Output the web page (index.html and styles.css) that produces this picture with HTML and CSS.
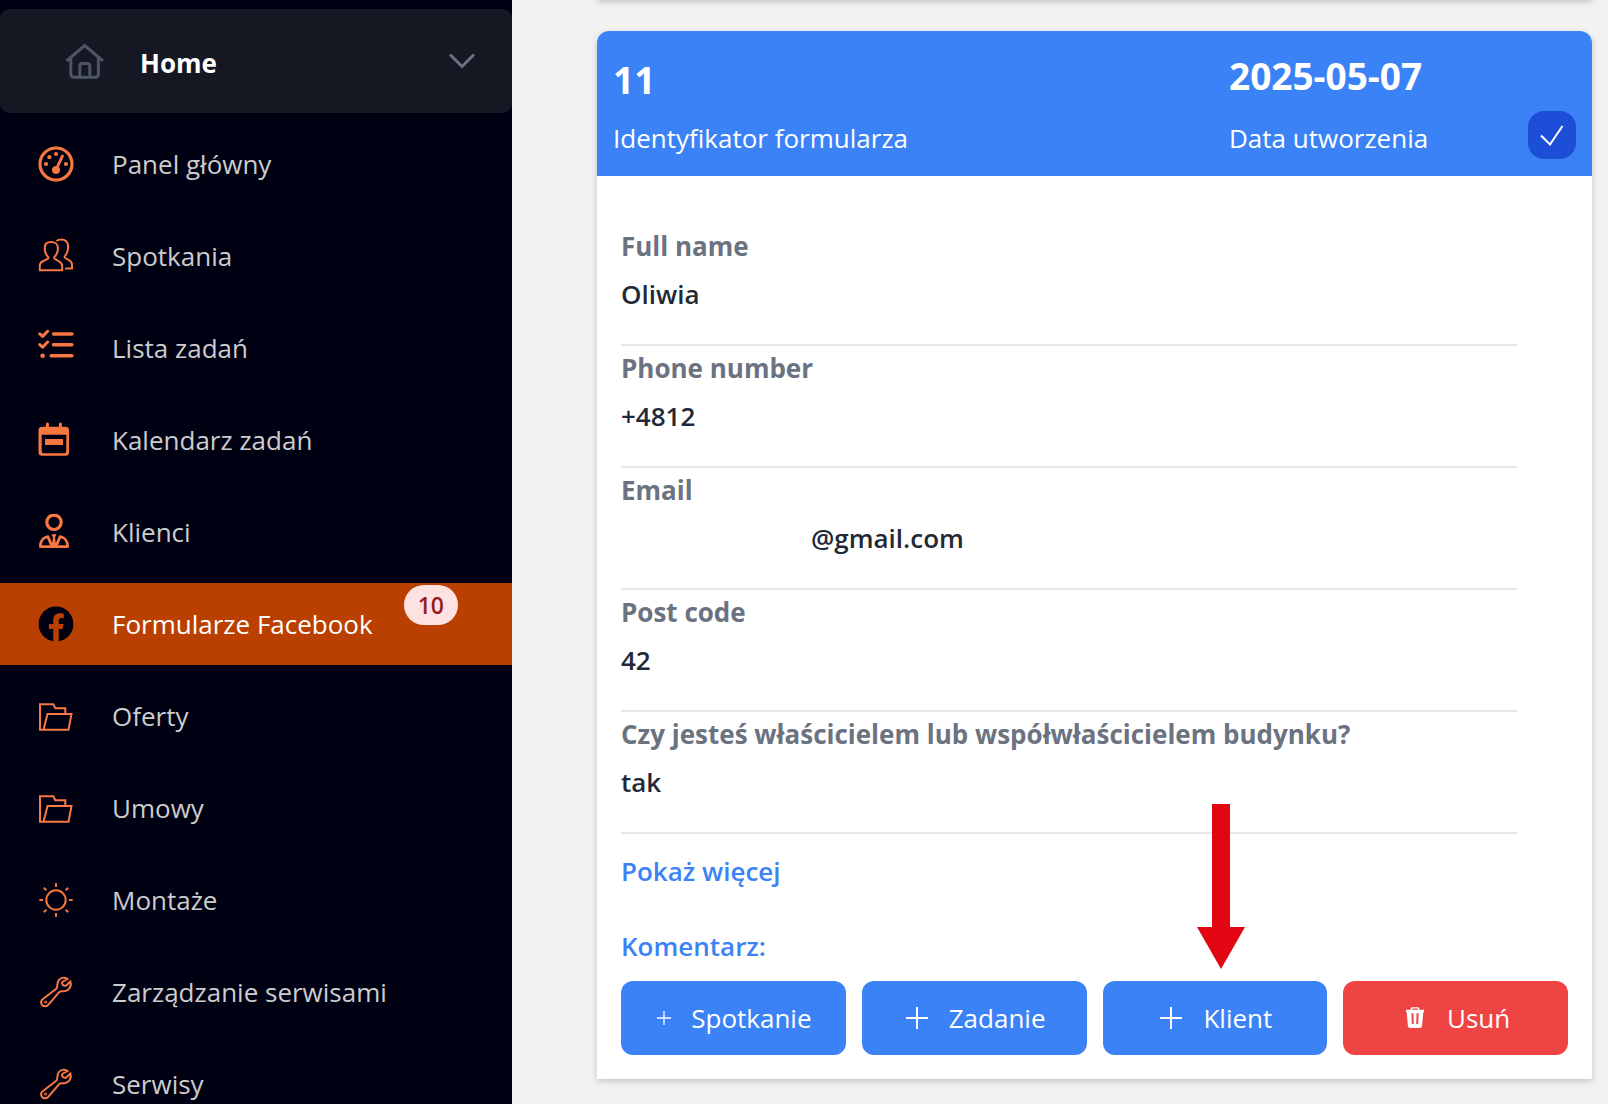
FILE: index.html
```html
<!DOCTYPE html>
<html lang="pl">
<head>
  <meta charset="UTF-8">
  <meta name="viewport" content="width=device-width, initial-scale=1.0">
  <title>Formularze Facebook</title>
  <link rel="stylesheet" href="styles.css">
</head>
<body>
  <!-- shared icons -->
  <svg class="sprite" aria-hidden="true">
    <symbol id="folder" viewBox="0 0 36 36">
      <path d="M5.5 31.7H2V6.3h13.3l2 4h10V16M5.5 31.7L9.5 16h24l-3 15.7z"/>
    </symbol>
    <symbol id="wrench" viewBox="0 0 36 36">
      <path d="M29.5 5C26.5 3 22.5 3.5 20.5 6.5 19 9 19.5 11.5 19 13.5c-.2 1-1 1.5-2 2.3L5 25c-2 1.5-2.2 4-1 5.8 1.8 2.2 4.8 1.8 6.5-.2l10-11.8c1-1.3 2-1.6 3.5-1.5 3 .3 6-.7 7.8-3.5 1.2-2 1.4-4.3.6-6.3l-3.9 3.8c-1.5 1-4 .3-4.5-1.8 0-1 .3-1.5 1-2z"/>
      <circle cx="7.6" cy="28" r=".5"/>
    </symbol>
    <symbol id="plus" viewBox="0 0 28 28">
      <path d="M14 3v22M3 14h22"/>
    </symbol>
  </svg>

  <div class="container">
    <aside class="sidebar">
      <button class="home" type="button">
        <svg class="home-icon" viewBox="0 0 40 36">
          <path d="M1.5 18L19.7 2.5 38 18M5.8 15v16q0 3.3 3.3 3.3h21q3.3 0 3.3-3.3V15M14.8 34V23q0-2.5 2.5-2.5h5q2.5 0 2.5 2.5v11"/>
        </svg>
        <span>Home</span>
        <svg class="chevron" viewBox="0 0 28 16"><path d="M2 1.5l12 12 12-12"/></svg>
      </button>
      <nav class="menu">
        <a href="#">
          <svg class="icon" viewBox="0 0 36 36">
            <circle cx="18" cy="18" r="16" stroke-width="3.2"/>
            <path d="M24.4 10L18 24" stroke-width="3" stroke-linecap="round"/>
            <g class="fill"><circle cx="18" cy="24" r="4"/><circle cx="8" cy="18" r="2.1"/><circle cx="11.4" cy="11.2" r="2.1"/><circle cx="18" cy="8" r="2.1"/><circle cx="28" cy="18" r="2.1"/></g>
          </svg>
          <span>Panel główny</span>
        </a>
        <a href="#">
          <svg class="icon" viewBox="0 0 36 36">
            <path d="M1.8 32.2V27.5C1.8 25 3.5 23.8 6 22.8L9.5 21c1-.7 1.3-1.2.5-2.2C7.5 16 6.8 14.5 6.8 12V9.5C6.8 6 9.5 4.1 13.2 4.1s6.6 1.9 6.6 5.4V12c0 2.5-.8 4-3.3 6.8-.7 1-.5 1.6.5 2.2l3.5 2.2c2.5 1.3 3.7 2.6 3.7 4.8v4.2zM18.5 3.2c1-1.2 3-1.6 5-1.6C27 1.6 30 4 30 7.5v3c0 3.5-.8 5-3 7.5-.7.9-.5 1.5.3 2l3.2 1.9c2.5 1.4 3.5 2.6 3.5 4.6v4h-7"/>
          </svg>
          <span>Spotkania</span>
        </a>
        <a href="#">
          <svg class="icon" viewBox="0 0 36 36">
            <g stroke-linecap="round" stroke-linejoin="round"><path d="M15.5 4h18.4M15.5 14.8h18.4M13.2 25.7h20.7" stroke-width="3.4"/><path d="M1.8 3.8l2.8 2.6 5-5.2M1.8 14.6l2.8 2.6 5-5.2" stroke-width="3"/></g>
            <circle class="fill" cx="4.6" cy="25.7" r="2.3"/>
          </svg>
          <span>Lista zadań</span>
        </a>
        <a href="#">
          <svg class="icon" viewBox="0 0 36 36">
            <path class="fill" fill-rule="evenodd" d="M4 4.7h23.5q3.5 0 3.5 3.5v22q0 3.5-3.5 3.5H4Q.5 33.7.5 30.2v-22Q.5 4.7 4 4.7zM3.7 12.7v16.6q0 2 2 2h20.6q2 0 2-2V12.7zM7 17h18v6H7z"/>
            <path d="M9.4 2v5M22.4 2v5" stroke-width="3" stroke-linecap="round"/>
          </svg>
          <span>Kalendarz zadań</span>
        </a>
        <a href="#">
          <svg class="icon" viewBox="0 0 36 36">
            <circle cx="16" cy="8.3" r="7.2" stroke-width="3.2"/>
            <path class="fill" fill-rule="evenodd" d="M1 32.5C1 26 5 21.6 10.8 21.3L14.2 29l.8-5.5-1.4-2.5.4-.7h4l.4.7-1.4 2.5.8 5.5 3.4-7.7C27 21.6 31 26 31 32.5q0 1.5-1.5 1.5h-27Q1 34 1 32.5zM3.8 31.2H12l-3-6.9c-3 .7-5 3.2-5.2 6.9zM28.2 31.2H20l3-6.9c3 .7 5 3.2 5.2 6.9z"/>
          </svg>
          <span>Klienci</span>
        </a>
        <a href="#" class="active">
          <svg class="icon" viewBox="0 0 512 512">
            <path class="fill" d="M504 256C504 119 393 8 256 8S8 119 8 256c0 123.78 90.69 226.38 209.25 245V327.69h-63V256h63v-54.64c0-62.15 37-96.48 93.67-96.48 27.14 0 55.52 4.84 55.52 4.84v61h-31.28c-30.8 0-40.41 19.12-40.41 38.73V256h68.78l-11 71.69h-57.78V501C413.31 482.38 504 379.78 504 256z"/>
          </svg>
          <span>Formularze Facebook</span>
          <span class="badge">10</span>
        </a>
        <a href="#"><svg class="icon"><use href="#folder"/></svg><span>Oferty</span></a>
        <a href="#"><svg class="icon"><use href="#folder"/></svg><span>Umowy</span></a>
        <a href="#">
          <svg class="icon" viewBox="0 0 36 36">
            <circle cx="18" cy="18" r="9.7"/>
            <path d="M18 1.3V5M18 31v3.7M1.3 18H5M31 18h3.7M5.8 5.8l2.6 2.6M27.6 27.6l2.6 2.6M5.8 30.2l2.6-2.6M27.6 8.4l2.6-2.6"/>
          </svg>
          <span>Montaże</span>
        </a>
        <a href="#"><svg class="icon"><use href="#wrench"/></svg><span>Zarządzanie serwisami</span></a>
        <a href="#"><svg class="icon"><use href="#wrench"/></svg><span>Serwisy</span></a>
      </nav>
    </aside>

    <main class="main">
      <div class="card previous"></div>
      <article class="card">
        <header class="card-header">
          <div class="form-id">
            <h2>11</h2>
            <p>Identyfikator formularza</p>
          </div>
          <div class="form-date">
            <h2>2025-05-07</h2>
            <p>Data utworzenia</p>
          </div>
          <button class="check" type="button" aria-label="Zaznacz">
            <svg viewBox="0 0 48 48"><path d="M13 24.5l9 9L34.5 15"/></svg>
          </button>
        </header>
        <div class="card-body">
          <dl class="fields">
            <div><dt>Full name</dt><dd>Oliwia</dd></div>
            <div><dt>Phone number</dt><dd>+4812</dd></div>
            <div><dt>Email</dt><dd class="email">@gmail.com</dd></div>
            <div><dt>Post code</dt><dd>42</dd></div>
            <div><dt>Czy jesteś właścicielem lub współwłaścicielem budynku?</dt><dd>tak</dd></div>
          </dl>
          <a href="#" class="more">Pokaż więcej</a>
          <p class="comment">Komentarz:</p>
          <div class="actions">
            <button class="btn" type="button"><svg class="small"><use href="#plus"/></svg>Spotkanie</button>
            <button class="btn" type="button"><svg><use href="#plus"/></svg>Zadanie</button>
            <div class="pointed">
              <svg class="arrow" viewBox="0 0 48 165"><path d="M15 0h18v123h15L24 165 0 123h15z"/></svg>
              <button class="btn" type="button"><svg><use href="#plus"/></svg>Klient</button>
            </div>
            <button class="btn delete" type="button">
              <svg viewBox="0 0 28 28">
                <path class="bin" d="M5 5.7h4.2l1.3-2.4h7l1.3 2.4H23v2.6h-.7l-1.2 13.5Q20.9 24 18.7 24H9.300Q7.100 24 6.900 21.800L5.700 8.300H5zM11 5.700h6l-.6-1.200h-4.800z"/>
                <path class="slots" d="M11.4 9.2l.4 10.8M16.6 9.2l-.4 10.8"/>
              </svg>Usuń
            </button>
          </div>
        </div>
      </article>
    </main>
  </div>
</body>
</html>
```
FILE: styles.css
```css
* { margin: 0; padding: 0; box-sizing: border-box; }
body {
  font-family: "Segoe UI", "Open Sans", "Noto Sans", sans-serif;
  font-size: 26px;
  line-height: 40px;
  background-color: #f2f2f2;
  height: 100vh;
  overflow: hidden;
}
button {
  font: inherit;
  border: none;
  cursor: pointer;
}
a { text-decoration: none; }
.sprite { display: none; }
.container {
  display: flex;
  height: 100%;
}

/* sidebar */
.sidebar {
  width: 512px;
  flex-shrink: 0;
  background-color: #000013;
  padding-top: 9px;
  overflow: hidden;
}
.home {
  display: flex;
  align-items: center;
  width: 100%;
  height: 104px;
  padding: 0 36px 0 65px;
  border-radius: 10px;
  background-color: #151823;
  color: #fff;
  font-weight: 700;
  text-align: left;
}
.home span {
  flex: 1;
  margin-left: 35px;
  padding-top: 4px;
}
.home-icon {
  width: 40px;
  height: 36px;
  fill: none;
  stroke: #4b5563;
  stroke-width: 3;
}
.chevron {
  width: 28px;
  height: 16px;
  fill: none;
  stroke: #6b7280;
  stroke-width: 3;
}
.menu {
  display: flex;
  flex-direction: column;
  gap: 10px;
  margin-top: 10px;
}
.menu a {
  position: relative;
  display: flex;
  align-items: center;
  height: 82px;
  flex-shrink: 0;
  padding-left: 38px;
  color: #ccc;
}
.icon {
  width: 36px;
  height: 36px;
  margin-right: 38px;
  fill: none;
  stroke: #f97740;
  stroke-width: 2;
}
.icon .fill {
  fill: #f97740;
  stroke: none;
}
.menu .active {
  background-color: #b94000;
  color: #fff;
}
.active .icon .fill { fill: #000013; }
.badge {
  position: absolute;
  top: 2px;
  right: 54px;
  padding: 0 14px;
  border-radius: 20px;
  background-color: #fee2e2;
  color: #991b1b;
  font-size: 23px;
  font-weight: 600;
}

/* form card */
.main {
  flex: 1;
  padding: 0 16px 0 85px;
}
.card {
  margin-bottom: 31px;
  border-radius: 12px 12px 0 0;
  background-color: #fff;
  box-shadow: 0 2px 6px rgba(0, 0, 0, 0.2);
}
.previous {
  height: 24px;
  margin-top: -24px;
}
.card-header {
  display: flex;
  align-items: flex-end;
  height: 145px;
  padding: 0 16px 17px;
  border-radius: 12px 12px 0 0;
  background-color: #3b82f6;
  color: #fff;
}
.card-header h2 {
  font-size: 37px;
  line-height: 48px;
}
.card-header p { line-height: 42px; }
.form-id { flex: 1; }
.form-id h2 { margin-bottom: 13px; }
.form-date { width: 299px; }
.form-date h2 { margin-bottom: 17px; }
.check {
  width: 48px;
  height: 48px;
  border-radius: 16px;
  background-color: #1d4ed8;
}
.check svg {
  display: block;
  fill: none;
  stroke: #fff;
  stroke-width: 2;
}
.card-body { padding: 48px 24px 24px; }
.fields {
  margin-right: 51px;
}
.fields div {
  height: 122px;
  padding-top: 2px;
  border-bottom: 2px solid #e5e7eb;
}
.fields dt {
  margin-bottom: 8px;
  color: #6b7280;
  font-weight: 700;
}
.fields dd {
  color: #1f2937;
  font-weight: 600;
}
.fields .email { padding-left: 190px; }
.more, .comment {
  color: #3b82f6;
  font-weight: 600;
}
.more {
  display: block;
  margin-top: 17px;
}
.comment {
  margin: 35px 0 15px;
}
.actions {
  display: grid;
  grid-template-columns: repeat(4, 1fr);
  gap: 16px;
}
.btn {
  display: flex;
  align-items: center;
  justify-content: center;
  gap: 18px;
  width: 100%;
  height: 74px;
  border-radius: 12px;
  background-color: #3b82f6;
  color: #fff;
}
.btn svg {
  width: 28px;
  height: 28px;
  fill: none;
  stroke: #fff;
  stroke-width: 2;
}
.btn .small {
  width: 18px;
  height: 18px;
}
.delete { background-color: #ef4444; }
.delete .bin {
  fill: #fff;
  fill-rule: evenodd;
  stroke: none;
}
.delete .slots { stroke: #ef4444; }

/* arrow over the client button */
.pointed { position: relative; }
.arrow {
  position: absolute;
  left: 42%;
  bottom: calc(100% + 12px);
  width: 48px;
  height: 165px;
  fill: #e20613;
}
```
